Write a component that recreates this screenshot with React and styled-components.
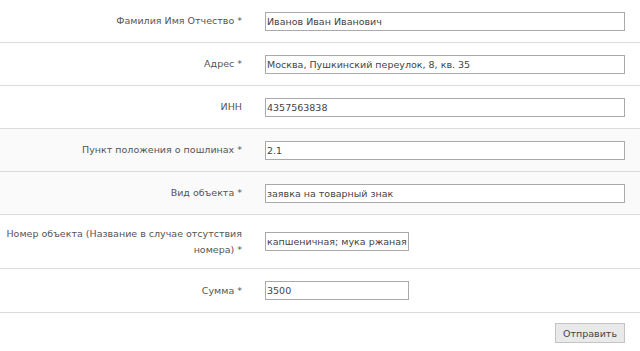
import React from "react";
import styled, { createGlobalStyle } from "styled-components";

const Global = createGlobalStyle`
  html, body { margin: 0; padding: 0; background: #fff; }
  body { font-family: "DejaVu Sans", Verdana, sans-serif; }
`;

const Form = styled.form`
  width: 640px;
  display: flex;
  flex-direction: column;
`;

const Row = styled.div`
  display: flex;
  align-items: center;
  gap: 23px;
  height: ${(p) => p.$h || 42}px;
  border-bottom: 1px solid #dcdcdc;
  background: ${(p) => (p.$shade ? "#fafafa" : "#fff")};
`;

const Label = styled.label`
  width: 242px;
  flex: none;
  text-align: right;
  font-size: 9.5px;
  line-height: 16px;
  color: #555;
`;

const Input = styled.input`
  box-sizing: border-box;
  width: ${(p) => (p.$short ? 144 : 360)}px;
  height: 19px;
  margin: 0;
  padding: 0 1px;
  border: 1px solid #aaa;
  background: #fff;
  font-family: "DejaVu Sans", Verdana, sans-serif;
  font-size: 9.5px;
  color: #444;
  outline: none;
`;

const Footer = styled.div`
  display: flex;
  justify-content: flex-end;
  padding: 10px 15px 0 0;
`;

const Button = styled.button`
  box-sizing: border-box;
  width: 70px;
  height: 20px;
  padding: 0;
  border: 1px solid #c4c4c4;
  background: #e9e9e9;
  font-family: "DejaVu Sans", Verdana, sans-serif;
  font-size: 9.5px;
  color: #444;
`;

const fields = [
  { label: "Фамилия Имя Отчество *", value: "Иванов Иван Иванович" },
  { label: "Адрес *", value: "Москва, Пушкинский переулок, 8, кв. 35" },
  { label: "ИНН", value: "4357563838" },
  { label: "Пункт положения о пошлинах *", value: "2.1", shade: true },
  { label: "Вид объекта *", value: "заявка на товарный знак", shade: true },
  {
    label: "Номер объекта (Название в случае отсутствия номера) *",
    value: "капшеничная; мука ржаная",
    short: true,
    h: 53,
  },
  { label: "Сумма *", value: "3500", short: true, h: 43 },
];

export default function App() {
  return (
    <>
      <Global />
      <Form onSubmit={(e) => e.preventDefault()}>
        {fields.map((f, i) => (
          <Row key={i} $shade={f.shade} $h={f.h}>
            <Label>{f.label}</Label>
            <Input $short={f.short} defaultValue={f.value} />
          </Row>
        ))}
        <Footer>
          <Button type="submit">Отправить</Button>
        </Footer>
      </Form>
    </>
  );
}
